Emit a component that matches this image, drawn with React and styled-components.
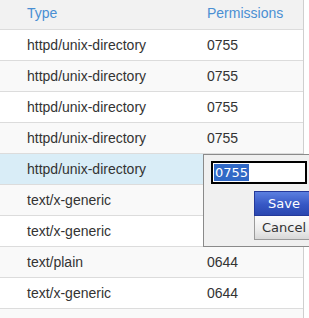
import React from 'react';
import styled, { createGlobalStyle, css } from 'styled-components';

const ROWS = [
  { type: 'httpd/unix-directory', perms: '0755' },
  { type: 'httpd/unix-directory', perms: '0755' },
  { type: 'httpd/unix-directory', perms: '0755' },
  { type: 'httpd/unix-directory', perms: '0755' },
  { type: 'httpd/unix-directory', perms: '', selected: true },
  { type: 'text/x-generic', perms: '' },
  { type: 'text/x-generic', perms: '' },
  { type: 'text/plain', perms: '0644' },
  { type: 'text/x-generic', perms: '0644' },
  { type: '', perms: '' },
];

const GlobalStyle = createGlobalStyle`
  html, body {
    margin: 0;
    padding: 0;
    background: #fff;
    overflow: hidden;
  }
  body {
    font-family: "Liberation Sans", Arial, sans-serif;
  }
`;

const Page = styled.div`
  position: relative;
  width: 309px;
  height: 318px;
  overflow: hidden;
`;

const Table = styled.div`
  width: 303px;
  border-right: 1px solid #cfcfcf;
`;

const Grid = styled.div`
  display: grid;
  grid-template-columns: 180px 1fr;
  align-items: center;
  padding-left: 27px;
  font-size: 14px;
  border-bottom: 1px solid #dcdcdc;
`;

const HeaderRow = styled(Grid)`
  height: 29px;
  background: #f2f2f2;
  color: #4a8fd3;
  padding-bottom: 4px;
  box-sizing: border-box;
  height: 30px;
`;

const Row = styled(Grid)`
  height: 30px;
  color: #333;
  background: ${({ striped }) => (striped ? '#f9f9f9' : '#fff')};
  ${({ selected }) =>
    selected &&
    css`
      background: #d9edf7;
    `};
`;

const Editor = styled.div`
  position: absolute;
  left: 203px;
  top: 154px;
  width: 130px;
  height: 91px;
  background: #f0f0f0;
  border: 1px solid #8a8a8a;
  padding: 6px 0 0 7px;
  box-sizing: border-box;
  height: 93px;
  display: flex;
  flex-direction: column;
  font-family: "DejaVu Sans", Verdana, sans-serif;
`;

const Field = styled.div`
  width: 96px;
  height: 23px;
  border: 2px solid #000;
  background: #fff;
  box-sizing: border-box;
  display: flex;
  align-items: center;
  padding-left: 1px;
  font-size: 13px;
`;

const Selected = styled.span`
  background: #3169c6;
  color: #fff;
  line-height: 17px;
  padding: 0 1px;
`;

const Buttons = styled.div`
  display: flex;
  flex-direction: column;
  margin: 7px 0 0 43px;
`;

const Button = styled.div`
  height: 25px;
  box-sizing: border-box;
  font-size: 13px;
  display: flex;
  align-items: center;
  padding-left: ${({ primary }) => (primary ? '13px' : '7px')};
  ${({ primary }) =>
    primary
      ? css`
          color: #fff;
          border: 1px solid #24399a;
          background: linear-gradient(#5b7fe0, #3657c4 55%, #2a47b0);
        `
      : css`
          height: 24px;
          color: #333;
          border: 1px solid #9a9a9a;
          border-top: none;
          background: linear-gradient(#fdfdfd, #ececec 60%, #d8d8d8);
        `};
`;

export default function App() {
  return (
    <Page>
      <GlobalStyle />
      <Table>
        <HeaderRow>
          <span>Type</span>
          <span>Permissions</span>
        </HeaderRow>
        {ROWS.map((r, i) => (
          <Row key={i} striped={i % 2 === 1} selected={r.selected}>
            <span>{r.type}</span>
            <span>{r.perms}</span>
          </Row>
        ))}
      </Table>
      <Editor>
        <Field>
          <Selected>0755</Selected>
        </Field>
        <Buttons>
          <Button primary>Save</Button>
          <Button>Cancel</Button>
        </Buttons>
      </Editor>
    </Page>
  );
}
